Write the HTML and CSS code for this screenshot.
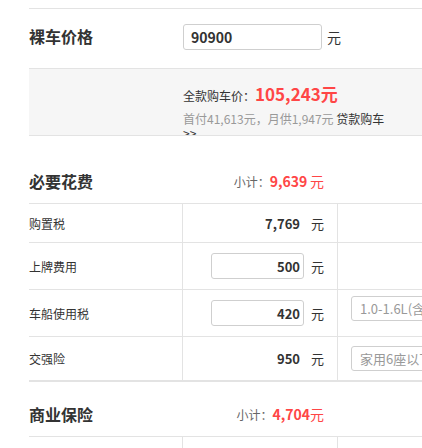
FILE: index.html
```html
<!DOCTYPE html>
<html lang="zh-CN">
  <head>
    <meta charset="UTF-8" />
    <meta name="viewport" content="width=device-width, initial-scale=1.0" />
    <title>购车计算器</title>
    <link rel="stylesheet" href="styles.css">
  </head>
  <body>
    <div class="calc">
      <!-- 裸车价格 -->
      <div class="price-row">
        <div class="title price-title">裸车价格</div>
        <div class="price-field">
          <input class="box box-price" type="text" value="90900">
          <span class="unit unit-price">元</span>
        </div>
      </div>

      <div class="summary">
        <p class="total">全款购车价：<strong>105,243元</strong></p>
        <p class="loan">首付41,613元，月供1,947元 <a href="#">贷款购车 &gt;&gt;</a></p>
      </div>

      <!-- 必要花费 -->
      <div class="section-head section-first">
        <h3 class="title">必要花费</h3>
        <div class="subtotal">小计：<strong>9,639</strong> <em>元</em></div>
      </div>

      <div class="fee-row row-short">
        <div class="cell cell-name">购置税</div>
        <div class="cell cell-value"><span class="value">7,769</span><span class="unit">元</span></div>
        <div class="cell cell-extra"></div>
      </div>
      <div class="fee-row">
        <div class="cell cell-name">上牌费用</div>
        <div class="cell cell-value"><input class="box box-fee" type="text" value="500"><span class="unit">元</span></div>
        <div class="cell cell-extra"></div>
      </div>
      <div class="fee-row">
        <div class="cell cell-name">车船使用税</div>
        <div class="cell cell-value"><input class="box box-fee" type="text" value="420"><span class="unit">元</span></div>
        <div class="cell cell-extra"><span class="pick pick-top">1.0-1.6L(含)</span></div>
      </div>
      <div class="fee-row row-last">
        <div class="cell cell-name">交强险</div>
        <div class="cell cell-value"><span class="value">950</span><span class="unit">元</span></div>
        <div class="cell cell-extra"><span class="pick">家用6座以下</span></div>
      </div>

      <!-- 商业保险 -->
      <div class="section-head">
        <h3 class="title">商业保险</h3>
        <div class="subtotal">小计：<strong>4,704</strong><em>元</em></div>
      </div>

      <div class="fee-row">
        <div class="cell cell-name"></div>
        <div class="cell cell-value"></div>
        <div class="cell cell-extra"></div>
      </div>
    </div>
  </body>
</html>
```

FILE: styles.css
```css
body {
  margin: 0;
  overflow: hidden;
  background: #fff;
  font-family: "Noto Sans CJK SC", "Noto Sans", sans-serif;
  color: #333;
}
.calc {
  width: 620px;
  margin-left: 29px;
  padding-top: 8px;
}
.title {
  margin: 0;
  width: 154px;
  font-size: 16px;
  line-height: 22px;
  font-weight: bold;
  color: #333;
}

/* price */
.price-row {
  display: flex;
  align-items: center;
  border-top: 1px solid #e3e3e3;
  padding: 15px 0 18px;
}
.price-title {
  margin-top: -2px;
}
.price-field {
  display: flex;
  align-items: center;
}
.box {
  box-sizing: border-box;
  height: 26px;
  border: 1px solid #cfcfcf;
  border-radius: 3px;
  background: #fff;
  font-family: "Noto Sans CJK SC", "Noto Sans", sans-serif;
  font-weight: bold;
  color: #333;
  outline: none;
}
.box-price {
  width: 139px;
  padding: 0 7px;
  font-size: 14px;
}
.unit {
  margin-left: 7px;
  font-size: 13px;
  color: #333;
}
.unit-price {
  margin-left: 5px;
  font-size: 14px;
}

.summary {
  box-sizing: border-box;
  height: 68px;
  overflow: hidden;
  padding: 13px 0 0 154px;
  background: #f6f6f6;
  border-top: 1px solid #e3e3e3;
  border-bottom: 1px solid #e3e3e3;
}
.summary p {
  margin: 0;
}
.total {
  font-size: 12px;
  line-height: 24px;
  color: #333;
}
.total strong {
  font-size: 17px;
  color: #ff4646;
}
.loan {
  width: 212px;
  margin-top: 4px !important;
  font-size: 12px;
  line-height: 14px;
  color: #999;
}
.loan a {
  color: #333;
  text-decoration: none;
}

/* sections */
.section-head {
  display: flex;
  align-items: center;
  padding: 21px 0 11px;
  border-bottom: 1px solid #e3e3e3;
}
.section-first {
  margin-top: 13px;
}
.subtotal {
  box-sizing: border-box;
  width: 155px;
  padding-right: 14px;
  text-align: right;
  font-size: 12px;
  color: #666;
}
.subtotal strong {
  font-size: 14px;
  color: #ff4646;
}
.subtotal em {
  font-style: normal;
  font-size: 14px;
  color: #ff4646;
}

.fee-row {
  box-sizing: border-box;
  display: flex;
  height: 47px;
  border-bottom: 1px solid #e3e3e3;
}
.row-short {
  height: 39px;
}
.row-last {
  height: 45px;
  border-bottom-width: 2px;
}
.cell {
  box-sizing: border-box;
  display: flex;
  align-items: center;
}
.cell-name {
  width: 154px;
  border-right: 1px solid #e3e3e3;
  font-size: 12px;
  color: #333;
}
.cell-value {
  width: 155px;
  justify-content: flex-end;
  padding-right: 13px;
  border-right: 1px solid #e3e3e3;
}
.cell-extra {
  flex: 1;
  padding-left: 13px;
}
.value {
  padding-right: 4px;
  font-size: 13px;
  font-weight: bold;
  color: #333;
}
.box-fee {
  width: 93px;
  padding: 0 3px;
  text-align: right;
  font-size: 13px;
}
.pick {
  box-sizing: border-box;
  width: 130px;
  height: 25px;
  line-height: 23px;
  padding-left: 8px;
  border: 1px solid #cfcfcf;
  border-radius: 3px;
  font-size: 13px;
  color: #999;
  white-space: nowrap;
}
.pick-top {
  margin-top: -10px;
}
```
